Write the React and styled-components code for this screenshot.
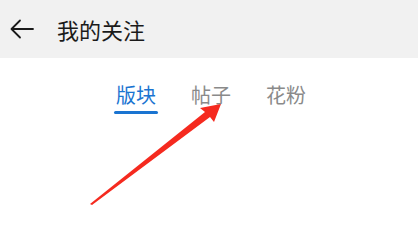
import React from 'react';
import styled, { createGlobalStyle } from 'styled-components';

const Global = createGlobalStyle`
  html, body { margin: 0; padding: 0; background: #fff; }
  body { font-family: "Noto Sans CJK SC", "Noto Sans", sans-serif; }
`;

const tabs = ['版块', '帖子', '花粉'];

export default function App() {
  return (
    <Page>
      <Global />
      <Header>
        <BackButton>
          <svg width="24" height="20" viewBox="0 0 24 20" fill="none" stroke="#1a1a1a" strokeWidth="1.8" strokeLinecap="round" strokeLinejoin="round">
            <path d="M23 10H2" />
            <path d="M10 1.5L1.5 10L10 18.5" />
          </svg>
        </BackButton>
        <Title>我的关注</Title>
      </Header>

      <Tabs>
        {tabs.map((t, i) => (
          <Tab key={t} $active={i === 0}>
            <TabLabel $active={i === 0}>{t}</TabLabel>
            <Underline $active={i === 0} />
          </Tab>
        ))}
      </Tabs>

      <Annotation width="418" height="243" viewBox="0 0 418 243">
        <polygon points="90,204 205,112 200,108 221,104 214,122 210,117 92,205" fill="#f52a1f" />
      </Annotation>
    </Page>
  );
}

const Page = styled.div`
  position: relative;
  width: 418px;
  height: 243px;
  background: #fff;
  overflow: hidden;
`;

const Header = styled.div`
  display: flex;
  align-items: center;
  height: 58px;
  padding-left: 10px;
  background: #f1f1f1;
`;

const BackButton = styled.div`
  display: flex;
  align-items: center;
  width: 24px;
  height: 20px;
`;

const Title = styled.div`
  margin-left: 23px;
  font-size: 22px;
  color: #1a1a1a;
  line-height: 1;
`;

const Tabs = styled.div`
  display: flex;
  gap: 31px;
  padding-left: 114px;
  margin-top: 24px;
`;

const Tab = styled.div`
  display: flex;
  flex-direction: column;
  align-items: center;
  width: 44px;
`;

const TabLabel = styled.div`
  font-size: 20px;
  line-height: 26px;
  color: ${p => (p.$active ? '#1a74d1' : '#8a8a8a')};
`;

const Underline = styled.div`
  margin-top: 3px;
  width: 44px;
  height: 3px;
  border-radius: 2px;
  background: ${p => (p.$active ? '#1a74d1' : 'transparent')};
`;

const Annotation = styled.svg`
  position: absolute;
  left: 0;
  top: 0;
  pointer-events: none;
`;
